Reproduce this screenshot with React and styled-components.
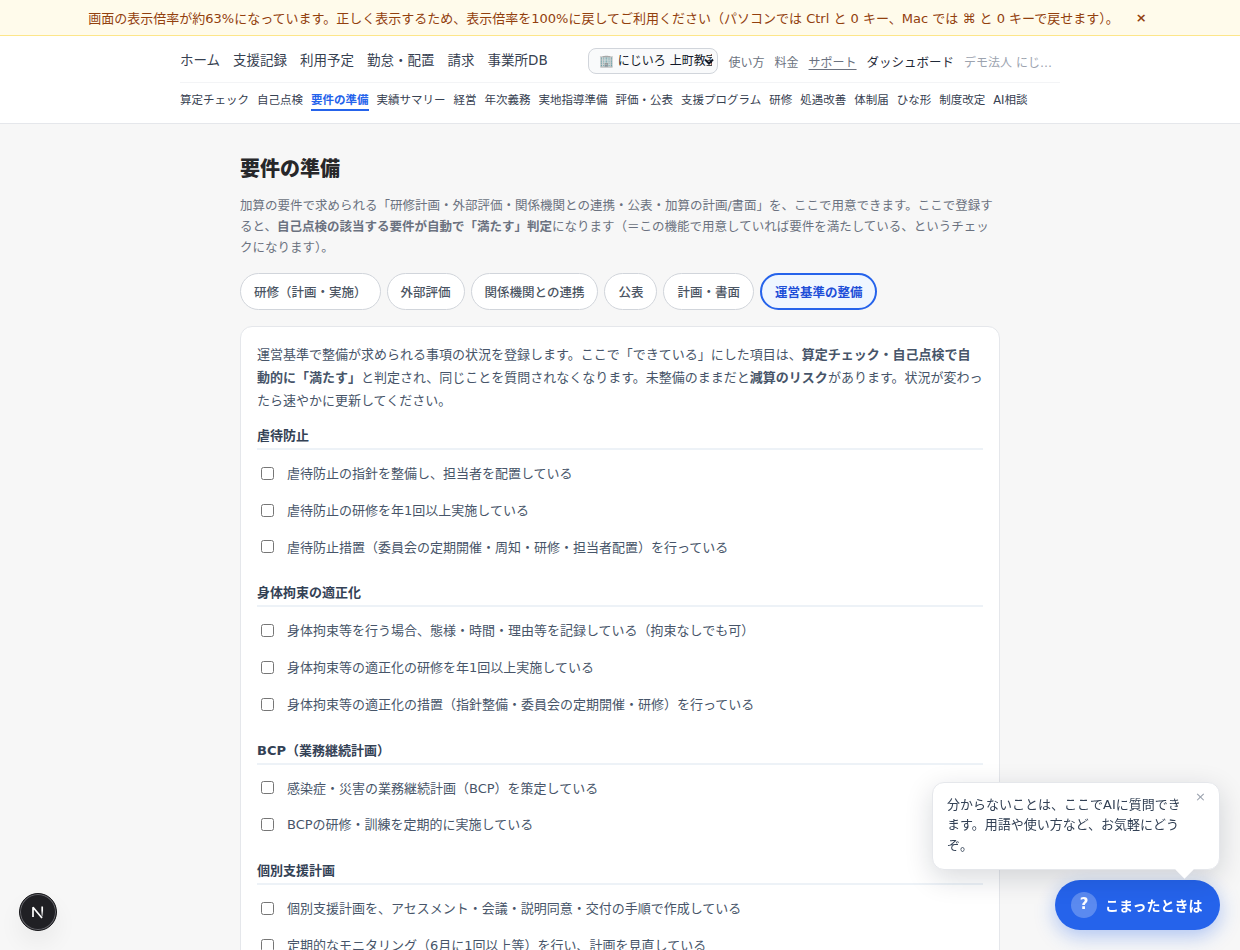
import React from 'react';
import styled, { createGlobalStyle, css } from 'styled-components';

const Global = createGlobalStyle`
  * { box-sizing: border-box; }
  html, body { margin: 0; height: 100%; }
  body {
    background: #f7f7f7;
    overflow: hidden;
    font-family: "DejaVu Sans", "Noto Sans CJK JP", sans-serif;
    font-size: 13px;
    color: #27272a;
  }
  h1, h2, p { margin: 0; }
  button { font-family: inherit; }
`;

const Screen = styled.div`
  height: 950px;
  overflow: hidden;
`;

const Banner = styled.div`
  height: 36px;
  display: flex;
  align-items: center;
  justify-content: center;
  gap: 9px;
  padding: 0 16px;
  background: #fffbeb;
  border-bottom: 1px solid #fde68a;
  color: #92400e;
  font-size: 13px;
  white-space: nowrap;
`;

const BannerClose = styled.button`
  border: 0;
  padding: 0 5px 1px 8px;
  background: none;
  color: inherit;
  font-size: 13px;
  font-weight: 700;
  line-height: 1;
`;

const Header = styled.header`
  height: 88px;
  background: #fff;
  border-bottom: 1px solid #e5e7eb;
`;

const HeaderInner = styled.div`
  width: 880px;
  margin: 0 auto;
`;

const TopRow = styled.div`
  height: 47px;
  display: flex;
  align-items: center;
  justify-content: space-between;
  border-bottom: 1px solid #f3f4f6;
  padding-top: 3px;
`;

const MainNav = styled.nav`
  display: flex;
  gap: 13px;
  padding-bottom: 3px;
  white-space: nowrap;
  font-size: 13.5px;
  color: #374151;
`;

const Tools = styled.div`
  width: 472px;
  display: flex;
  align-items: center;
  gap: 10px;
  white-space: nowrap;
`;

const SelectWrap = styled.div`
  position: relative;
  width: 130px;
  height: 26px;
  margin-right: 0.5px;

  svg {
    position: absolute;
    right: 4px;
    top: 10px;
    pointer-events: none;
  }
`;

const OfficeSelect = styled.select`
  appearance: none;
  display: block;
  width: 100%;
  height: 100%;
  padding: 0 5px 0 10px;
  border: 1px solid #d1d5db;
  border-radius: 8px;
  background: #f9fafb;
  color: #111827;
  font: 400 12px "DejaVu Sans", "Noto Sans CJK JP", sans-serif;
`;

const ToolLink = styled.span`
  font-size: ${(p) => (p.$strong ? '12.5px' : '12px')};
  color: ${(p) => (p.$strong ? '#1f2937' : p.$faint ? '#9ca3af' : '#6b7280')};
  text-decoration: ${(p) => (p.$underline ? 'underline' : 'none')};
  text-underline-offset: 2px;
  padding-top: 2px;
  ${(p) =>
    p.$faint &&
    css`
      width: 90px;
      overflow: hidden;
      text-overflow: ellipsis;
    `}
`;

const SubNav = styled.nav`
  display: flex;
  gap: 8px;
  padding-top: 8px;
  white-space: nowrap;
  font-size: 11.5px;
  line-height: 19px;
`;

const SubLink = styled.span`
  height: 20px;
  color: ${(p) => (p.$active ? '#2563eb' : '#374151')};
  font-weight: ${(p) => (p.$active ? 700 : 400)};
  border-bottom: 2px solid ${(p) => (p.$active ? '#2563eb' : 'transparent')};
`;

const Main = styled.main`
  width: 760px;
  margin: 0 auto;
  padding-top: 29px;
`;

const Title = styled.h1`
  font-size: 20px;
  line-height: 32px;
  font-weight: 800;
`;

const Lead = styled.p`
  margin-top: 10px;
  font-size: 12.5px;
  line-height: 21px;
  color: #6b7280;
`;

const Pills = styled.div`
  display: flex;
  gap: 6px;
  margin-top: 15px;
`;

const Pill = styled.button`
  height: 37px;
  padding: 0 13px;
  border-radius: 999px;
  border: ${(p) => (p.$active ? '2px solid #2563eb' : '1px solid #d1d5db')};
  background: ${(p) => (p.$active ? '#eff6ff' : '#fff')};
  color: ${(p) => (p.$active ? '#1d4ed8' : '#4b5563')};
  font-size: 12.5px;
  font-weight: ${(p) => (p.$active ? 700 : 500)};
  white-space: nowrap;
`;

const Card = styled.section`
  margin-top: 16px;
  padding: 16px;
  border: 1px solid #e5e7eb;
  border-radius: 12px;
  background: #fff;
  color: #475569;
`;

const Intro = styled.p`
  font-size: 13px;
  line-height: 23px;
`;

const Groups = styled.div`
  padding-top: 10.2px;
`;

const Group = styled.div`
  padding-bottom: 14.9px;
`;

const GroupTitle = styled.h2`
  height: 28px;
  padding-top: 4px;
  border-bottom: 2px solid #edf2f7;
  font-size: 13px;
  line-height: 20px;
  font-weight: 700;
  color: #334155;
`;

const CheckList = styled.div`
  padding-top: 4px;
`;

const CheckRow = styled.label`
  height: 36.8px;
  display: flex;
  align-items: center;
  gap: 13px;
  padding-left: 4px;
  font-size: 13px;
`;

const Check = styled.input`
  width: 13px;
  height: 13px;
  margin: 1.4px 0 0;
`;

const HelpDock = styled.aside`
  position: fixed;
  right: 20px;
  bottom: 20px;
  display: flex;
  flex-direction: column;
  align-items: flex-end;
  gap: 10px;
`;

const Bubble = styled.div`
  position: relative;
  width: 288px;
  height: 88px;
  padding: 12px 37px 12px 14px;
  border: 1px solid #e5e7eb;
  border-radius: 12px;
  background: #fff;
  box-shadow: 0 8px 28px rgba(15, 23, 42, 0.16);
  font-size: 13px;
  line-height: 20.4px;
  color: #334155;

  &::after {
    content: '';
    position: absolute;
    right: 28px;
    bottom: -7px;
    width: 13px;
    height: 13px;
    background: #fff;
    transform: rotate(45deg);
  }
`;

const BubbleClose = styled.button`
  position: absolute;
  top: 5px;
  right: 13px;
  border: 0;
  padding: 0;
  background: none;
  font-size: 13px;
  line-height: 18px;
  color: #9ca3af;
`;

const HelpButton = styled.button`
  width: 165px;
  height: 50px;
  display: flex;
  align-items: center;
  gap: 8px;
  padding: 0 16px;
  border: 0;
  border-radius: 25px;
  background: #2563eb;
  color: #fff;
  font-size: 14px;
  font-weight: 700;
  white-space: nowrap;
  box-shadow: 0 6px 20px rgba(37, 99, 235, 0.35);
`;

const HelpMark = styled.span`
  width: 26px;
  height: 26px;
  flex: none;
  display: grid;
  place-items: center;
  padding-bottom: 2px;
  border-radius: 50%;
  background: rgba(255, 255, 255, 0.25);
  font-size: 15px;
`;

const DevBadge = styled.div`
  position: fixed;
  left: 19px;
  bottom: 19px;
  width: 38px;
  height: 38px;
  display: grid;
  place-items: center;
  border-radius: 50%;
  background: #202024;
  border: 1px solid #17171a;
  box-shadow: inset 0 0 0 1px #66666c, 0 12px 24px rgba(0, 0, 0, 0.06);
`;

const mainLinks = ['ホーム', '支援記録', '利用予定', '勤怠・配置', '請求', '事業所DB'];
const subLinks = ['算定チェック', '自己点検', '要件の準備', '実績サマリー', '経営', '年次義務', '実地指導準備', '評価・公表', '支援プログラム', '研修', '処遇改善', '体制届', 'ひな形', '制度改定', 'AI相談'];
const tabs = ['研修（計画・実施）', '外部評価', '関係機関との連携', '公表', '計画・書面', '運営基準の整備'];
const groups = [
  ['虐待防止', ['虐待防止の指針を整備し、担当者を配置している', '虐待防止の研修を年1回以上実施している', '虐待防止措置（委員会の定期開催・周知・研修・担当者配置）を行っている']],
  ['身体拘束の適正化', ['身体拘束等を行う場合、態様・時間・理由等を記録している（拘束なしでも可）', '身体拘束等の適正化の研修を年1回以上実施している', '身体拘束等の適正化の措置（指針整備・委員会の定期開催・研修）を行っている']],
  ['BCP（業務継続計画）', ['感染症・災害の業務継続計画（BCP）を策定している', 'BCPの研修・訓練を定期的に実施している']],
  ['個別支援計画', ['個別支援計画を、アセスメント・会議・説明同意・交付の手順で作成している', '定期的なモニタリング（6月に1回以上等）を行い、計画を見直している']],
];

export default function App() {
  return (
    <Screen lang="ja">
      <Global />
      <Banner>
        <span>画面の表示倍率が約63%になっています。正しく表示するため、表示倍率を100%に戻してご利用ください（パソコンでは Ctrl と 0 キー、Mac では ⌘ と 0 キーで戻せます）。</span>
        <BannerClose aria-label="閉じる">×</BannerClose>
      </Banner>
      <Header>
        <HeaderInner>
          <TopRow>
            <MainNav>{mainLinks.map((t) => <span key={t}>{t}</span>)}</MainNav>
            <Tools>
              <SelectWrap>
                <OfficeSelect><option>🏢 にじいろ 上町教室</option></OfficeSelect>
                <svg width="10" height="8" viewBox="0 0 10 8" fill="none">
                  <path d="M1 1.5L5 5.5L9 1.5" stroke="#111827" strokeWidth="2" />
                </svg>
              </SelectWrap>
              <ToolLink>使い方</ToolLink>
              <ToolLink>料金</ToolLink>
              <ToolLink $underline>サポート</ToolLink>
              <ToolLink $strong>ダッシュボード</ToolLink>
              <ToolLink $faint>デモ法人 にじいろ福祉会</ToolLink>
            </Tools>
          </TopRow>
          <SubNav>
            {subLinks.map((t) => <SubLink key={t} $active={t === '要件の準備'}>{t}</SubLink>)}
          </SubNav>
        </HeaderInner>
      </Header>
      <Main>
        <Title>要件の準備</Title>
        <Lead>
          加算の要件で求められる「研修計画・外部評価・関係機関との連携・公表・加算の計画/書面」を、ここで用意できます。ここで登録すると、<b>自己点検の該当する要件が自動で「満たす」判定</b>になります（＝この機能で用意していれば要件を満たしている、というチェックになります）。
        </Lead>
        <Pills>
          {tabs.map((t, i) => <Pill key={t} $active={i === 5}>{t}</Pill>)}
        </Pills>
        <Card>
          <Intro>
            運営基準で整備が求められる事項の状況を登録します。ここで「できている」にした項目は、<b>算定チェック・自己点検で自動的に「満たす」</b>と判定され、同じことを質問されなくなります。未整備のままだと<b>減算のリスク</b>があります。状況が変わったら速やかに更新してください。
          </Intro>
          <Groups>
            {groups.map(([title, rows]) => (
              <Group key={title}>
                <GroupTitle>{title}</GroupTitle>
                <CheckList>
                  {rows.map((r) => (
                    <CheckRow key={r}><Check type="checkbox" />{r}</CheckRow>
                  ))}
                </CheckList>
              </Group>
            ))}
          </Groups>
        </Card>
      </Main>
      <HelpDock>
        <Bubble>
          分からないことは、ここでAIに質問できます。用語や使い方など、お気軽にどうぞ。
          <BubbleClose aria-label="閉じる">×</BubbleClose>
        </Bubble>
        <HelpButton><HelpMark>?</HelpMark>こまったときは</HelpButton>
      </HelpDock>
      <DevBadge>
        <svg width="14" height="14" viewBox="0 0 14 14" fill="none">
          <defs>
            <linearGradient id="fade" x1="0" y1="0" x2="0" y2="14" gradientUnits="userSpaceOnUse">
              <stop offset=".4" stopColor="#fff" />
              <stop offset="1" stopColor="#fff" stopOpacity="0" />
            </linearGradient>
          </defs>
          <path d="M2 12V2.2L11 13" stroke="#fff" strokeWidth="1.7" strokeLinejoin="bevel" />
          <path d="M11.2 1.5v10" stroke="url(#fade)" strokeWidth="1.7" />
        </svg>
      </DevBadge>
    </Screen>
  );
}
